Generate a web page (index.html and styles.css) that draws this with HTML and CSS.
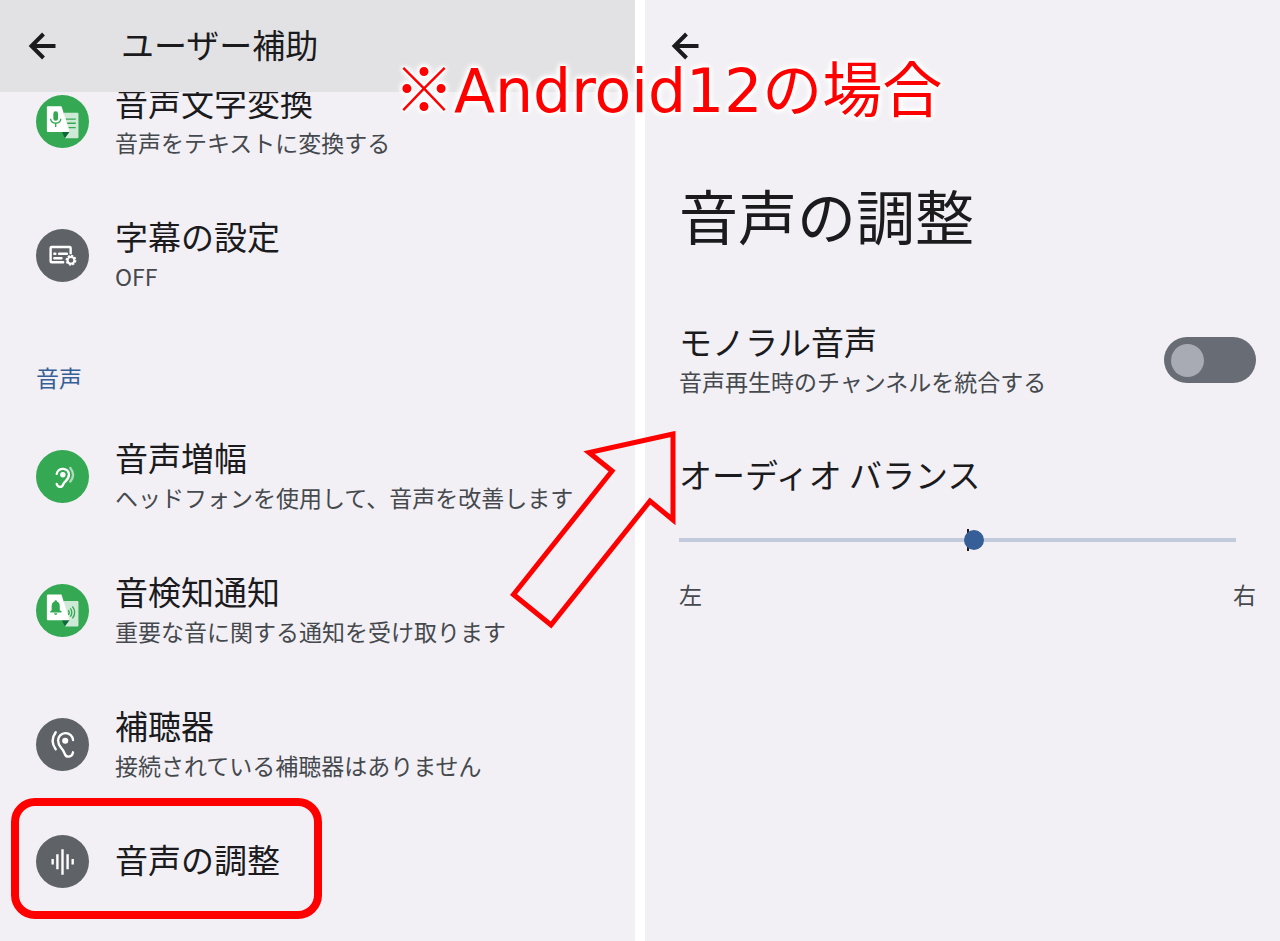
FILE: index.html
```html
<!DOCTYPE html>
<html lang="ja">
<head>
<meta charset="utf-8">
<meta name="viewport" content="width=device-width, initial-scale=1">
<title>ユーザー補助</title>
<link rel="stylesheet" href="styles.css">
</head>
<body>
<div class="stage">
  <section class="panel">
    <header class="topbar">
      <button class="back" type="button" aria-label="戻る">
        <svg viewBox="0 0 28 28"><path d="M27.500 14H4M15.500 2L3.500 14L15.500 26"/></svg>
      </button>
      <h2 class="topbar-title">ユーザー補助</h2>
    </header>
    <div class="scroller">
      <div class="list">
        <a class="row" href="#">
          <svg class="icon green" viewBox="0 0 156 156">
            <path class="sheet" d="M82 52H122Q125 52 125 55V124Q125 127 122 127H85Z"/>
            <path class="line" d="M88 71H117M92 83H117M96 96H117"/>
            <path class="fold" d="M76 108H99L85 127Z"/>
            <path class="solid" d="M35 33H75L99 109H35Q32 109 32 106V36Q32 33 35 33Z"/>
            <rect class="mark" x="51" y="48" width="14" height="28" rx="7"/>
            <path class="line" d="M43 70Q44 83 58 83Q72 83 73 70M58 83V94"/>
          </svg>
          <span class="text"><span class="title">音声文字変換</span><span class="sub">音声をテキストに変換する</span></span>
        </a>
        <a class="row" href="#">
          <svg class="icon gray" viewBox="0 0 156 156">
            <path class="stroke" d="M80 98H46Q43 98 43 95V56Q43 53 46 53H99Q102 53 102 56V73"/>
            <path class="stroke" d="M54 73H57M68 73H91M54 86H75"/>
            <circle class="gap" cx="103" cy="92" r="18"/>
            <circle class="teeth" cx="103" cy="92" r="13"/>
            <circle class="ring" cx="103" cy="92" r="10"/>
          </svg>
          <span class="text"><span class="title">字幕の設定</span><span class="sub">OFF</span></span>
        </a>
        <h3 class="category">音声</h3>
        <a class="row" href="#">
          <svg class="icon green" viewBox="0 0 156 156">
            <path class="stroke" d="M61 70A18 16 0 0 1 97 73C97 89 83 91 80 101C77 111 64 111 61 100"/>
            <circle class="solid" cx="79" cy="73" r="8"/>
            <path class="stroke soft" d="M101 53Q117 73 101 93"/>
          </svg>
          <span class="text"><span class="title">音声増幅</span><span class="sub">ヘッドフォンを使用して、音声を改善します</span></span>
        </a>
        <a class="row" href="#">
          <svg class="icon green" viewBox="0 0 156 156">
            <path class="sheet" d="M82 50H122Q125 50 125 53V122Q125 125 122 125H85Z"/>
            <path class="line" d="M95 77Q101 84 95 91M101 72Q110 84 101 96M107 66Q121 84 107 101"/>
            <path class="fold" d="M76 106H99L85 125Z"/>
            <path class="solid" d="M35 31H75L99 107H35Q32 107 32 104V34Q32 31 35 31Z"/>
            <path class="mark" d="M42 84V80L46 77V66Q46 54 54 52Q54 48 58 48Q62 48 62 52Q70 54 70 66V77L75 80V84ZM53 86H63Q62 91 58 91Q54 91 53 86Z"/>
          </svg>
          <span class="text"><span class="title">音検知通知</span><span class="sub">重要な音に関する通知を受け取ります</span></span>
        </a>
        <a class="row" href="#">
          <svg class="icon gray" viewBox="0 0 156 156">
            <path class="stroke" d="M109 65A22 21 0 0 0 65 66C65 86 79 87 84 104C88 118 106 117 109 101"/>
            <circle class="solid" cx="86" cy="67" r="9"/>
            <path class="stroke" d="M58 42Q40 67 58 92"/>
          </svg>
          <span class="text"><span class="title">補聴器</span><span class="sub">接続されている補聴器はありません</span></span>
        </a>
        <a class="row short marked" href="#">
          <svg class="icon gray" viewBox="0 0 156 156">
            <path class="bars" d="M49 71V87M63 57V101M78 42V117M93 57V101M108 71V87"/>
          </svg>
          <span class="text"><span class="title">音声の調整</span></span>
        </a>
      </div>
    </div>
  </section>

  <section class="panel">
    <header class="topbar plain">
      <button class="back" type="button" aria-label="戻る">
        <svg viewBox="0 0 28 28"><path d="M27.500 14H4M15.500 2L3.500 14L15.500 26"/></svg>
      </button>
    </header>
    <div class="detail">
      <h1 class="heading">音声の調整</h1>
      <div class="setting">
        <label class="text" for="mono"><span class="title">モノラル音声</span><span class="sub">音声再生時のチャンネルを統合する</span></label>
        <input class="switch" id="mono" type="checkbox" role="switch">
      </div>
      <label class="title" for="balance">オーディオ バランス</label>
      <div class="slider">
        <input class="range" id="balance" type="range" min="0" max="200" value="106">
      </div>
      <div class="ends"><span>左</span><span>右</span></div>
    </div>
  </section>

  <svg class="pointer" viewBox="0 0 180 210" aria-hidden="true">
    <path d="M163 14L79 32.500L102 51L3.500 174.500L41 205L140 81L163 100Z"/>
  </svg>
  <p class="note"><span class="cjk">※</span>Android12<span class="cjk">の場合</span></p>
</div>
</body>
</html>
```
FILE: styles.css
```css
*, *::before, *::after { box-sizing: border-box; }

body {
  margin: 0;
  background: #fff;
  color: #1b1b1e;
  font-family: "Noto Sans CJK JP", sans-serif;
}

h1, h2, h3, p { margin: 0; font-weight: 400; }

.stage {
  position: relative;
  display: grid;
  grid-template-columns: 1fr 1fr;
  gap: 10px;
  min-height: 100vh;
  overflow: hidden;
}

.panel { background: #f2f0f5; min-width: 0; }

.topbar {
  display: flex;
  align-items: center;
  gap: 65px;
  height: 92px;
  padding-left: 28px;
  background: #e2e2e4;
}
.topbar.plain { background: none; padding-left: 26px; }
.topbar-title { padding-bottom: 5px; font-size: 33px; line-height: 48px; }

.back {
  width: 28px;
  height: 28px;
  padding: 0;
  border: 0;
  background: none;
}
.back svg { display: block; }
.back path { fill: none; stroke: #1b1b1e; stroke-width: 4; }

.scroller { overflow: hidden; }
.list { margin-top: -38px; padding-bottom: 30px; }

.row {
  position: relative;
  display: flex;
  align-items: center;
  gap: 26px;
  min-height: 134px;
  padding-left: 36px;
  color: inherit;
  text-decoration: none;
}
.row.short { min-height: 100px; }

.marked::after {
  content: "";
  position: absolute;
  top: -13px;
  bottom: -8px;
  left: 11px;
  width: 311px;
  border: 8px solid #f00;
  border-radius: 24px;
}

.text { display: block; padding-bottom: 5px; }
.title { display: block; font-size: 33px; line-height: 48px; }
.sub { display: block; font-size: 23px; line-height: 33px; color: #45494d; }

.category {
  padding: 39px 0 15px 36px;
  font-size: 23px;
  line-height: 33px;
  color: #375f97;
}

.icon { flex: none; width: 53px; height: 53px; border-radius: 50%; }
.green { background: #34a853; }
.gray { background: #5f6368; }
.solid { fill: #fff; }
.sheet { fill: #ceead6; }
.fold { fill: #0d6a38; }
.mark { fill: #34a853; }
.line { fill: none; stroke: #34a853; stroke-width: 4; }
.stroke { fill: none; stroke: #fff; stroke-width: 7; stroke-linecap: round; }
.soft { stroke: #aedcba; }
.bars { fill: none; stroke: #fff; stroke-width: 7; }
.gap { fill: #5f6368; }
.teeth { fill: none; stroke: #fff; stroke-width: 6; stroke-dasharray: 6 4; }
.ring { fill: #5f6368; stroke: #fff; stroke-width: 6; }

.detail { padding: 80px 24px 0 34px; }
.heading { font-size: 59px; line-height: 86px; }

.setting {
  display: flex;
  align-items: center;
  justify-content: space-between;
  margin: 59px 0 47px;
}

.switch {
  appearance: none;
  display: flex;
  align-items: center;
  flex: none;
  width: 92px;
  height: 46px;
  margin: 0;
  padding: 0 7px;
  border-radius: 23px;
  background: #686c74;
}
.switch::before {
  content: "";
  width: 33px;
  height: 33px;
  border-radius: 50%;
  background: #a8abb4;
}
.switch:checked { justify-content: flex-end; }

.slider {
  display: flex;
  align-items: center;
  height: 22px;
  margin-top: 31px;
  padding-right: 20px;
  background: linear-gradient(#1b1b1e, #1b1b1e) center / 2px 100% no-repeat;
}
.range {
  appearance: none;
  width: 100%;
  height: 20px;
  margin: 0;
  background: linear-gradient(#c2cbdc, #c2cbdc) center / 100% 4px no-repeat;
}
.range::-webkit-slider-thumb {
  appearance: none;
  width: 20px;
  height: 20px;
  border-radius: 50%;
  background: #375f97;
}

.ends {
  display: flex;
  justify-content: space-between;
  margin-top: 27px;
  font-size: 23px;
  line-height: 33px;
  color: #45494d;
}

.pointer {
  position: absolute;
  top: 420px;
  left: 510px;
  width: 180px;
  height: 210px;
  pointer-events: none;
}
.pointer path { fill: none; stroke: #f00; stroke-width: 5; stroke-miterlimit: 6; }

.note {
  position: absolute;
  top: 41px;
  left: 394px;
  font-family: "DejaVu Sans", "Noto Sans CJK JP", sans-serif;
  font-size: 60px;
  line-height: 90px;
  white-space: nowrap;
  color: #f00;
  text-shadow: 0 0 3px #fff, 0 0 4px #fff, 0 0 4px #fff, 0 0 6px #fff, 0 0 6px #fff, 0 0 8px #fff, 0 0 8px #fff;
}
.cjk { font-family: "Noto Sans CJK JP", sans-serif; }
```
